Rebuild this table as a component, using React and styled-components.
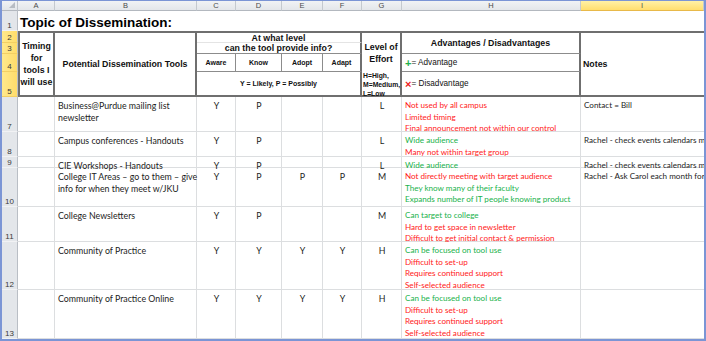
import styled, { createGlobalStyle } from 'styled-components';

const GlobalStyle = createGlobalStyle`
  html, body { margin: 0; padding: 0; background: #fff; }
  body { font-family: "Liberation Sans", Arial, sans-serif; }
`;

const GRID = '#dcdee0';
const RULE = '2px solid #6f6f6f';
const THIN = '1px solid #8c8c8c';

const COLS = ['A', 'B', 'C', 'D', 'E', 'F', 'G', 'H', 'I'];
const ROWS = [1, 2, 3, 4, 5, 7, 8, 9, 10, 11, 12, 13];

const tools = [
  {
    name: ['Business@Purdue mailing list', 'newsletter'],
    level: ['Y', 'P', '', ''],
    effort: 'L',
    pros: [
      ['r', 'Not used by all campus'],
      ['r', 'Limited timing'],
      ['r', 'Final announcement not within our control'],
    ],
    note: 'Contact = Bill',
  },
  {
    name: ['Campus conferences - Handouts'],
    level: ['Y', 'P', '', ''],
    effort: 'L',
    pros: [
      ['g', 'Wide audience'],
      ['r', 'Many not within target group'],
    ],
    note: 'Rachel - check events calendars monthly',
  },
  {
    name: ['CIE Workshops - Handouts'],
    level: ['Y', 'P', '', ''],
    effort: 'L',
    pros: [['g', 'Wide audience']],
    note: 'Rachel - check events calendars monthly',
  },
  {
    name: ['College IT Areas – go to them – give', 'info for when they meet w/JKU'],
    level: ['Y', 'P', 'P', 'P'],
    effort: 'M',
    pros: [
      ['r', 'Not directly meeting with target audience'],
      ['g', 'They know many of their faculty'],
      ['g', 'Expands number of IT people knowing product'],
    ],
    note: 'Rachel - Ask Carol each month for updates',
  },
  {
    name: ['College Newsletters'],
    level: ['Y', 'P', '', ''],
    effort: 'M',
    pros: [
      ['g', 'Can target to college'],
      ['r', 'Hard to get space in newsletter'],
      ['r', 'Difficult to get initial contact & permission'],
    ],
    note: '',
  },
  {
    name: ['Community of Practice'],
    level: ['Y', 'Y', 'Y', 'Y'],
    effort: 'H',
    pros: [
      ['g', 'Can be focused on tool use'],
      ['r', 'Difficult to set-up'],
      ['r', 'Requires continued support'],
      ['r', 'Self-selected audience'],
    ],
    note: '',
  },
  {
    name: ['Community of Practice Online'],
    level: ['Y', 'Y', 'Y', 'Y'],
    effort: 'H',
    pros: [
      ['g', 'Can be focused on tool use'],
      ['r', 'Difficult to set-up'],
      ['r', 'Requires continued support'],
      ['r', 'Self-selected audience'],
    ],
    note: '',
  },
];

export default function App() {
  return (
    <>
      <GlobalStyle />
      <Frame>
        <Sheet>
          <Corner />
          {COLS.map((c, i) => (
            <ColHead key={c} $col={i + 2} $selected={c === 'I'}>
              {c}
            </ColHead>
          ))}
          {ROWS.map((r, i) => (
            <RowHead key={r} $row={i + 2} $selected={r >= 2 && r <= 5}>
              {r}
            </RowHead>
          ))}

          <Title $col={2} $span={9} $row={2}>
            Topic of Dissemination:
          </Title>

          <Head $col={2} $row={3} $rspan={4} $bl $bt $br $bb $center>
            Timing
            <br />
            for
            <br />
            tools I
            <br />
            will use
          </Head>
          <Head $col={3} $row={3} $rspan={4} $bt $br $bb $center>
            Potential Dissemination Tools
          </Head>
          <Head $col={4} $span={4} $row={3} $bt $br $faint $center>
            At what level
          </Head>
          <Head $col={4} $span={4} $row={4} $br $thinBottom $center>
            can the tool provide info?
          </Head>
          {['Aware', 'Know', 'Adopt', 'Adapt'].map((l, i) => (
            <Small
              key={l}
              $col={4 + i}
              $row={5}
              $thinRight={i < 3}
              $br={i === 3}
              $thinBottom
              $center
            >
              {l}
            </Small>
          ))}
          <Small $col={4} $span={4} $row={6} $br $bb $center>
            Y = Likely, P = Possibly
          </Small>
          <Head $col={8} $row={3} $rspan={3} $bt $br $center>
            Level of
            <br />
            Effort
          </Head>
          <Legend $col={8} $row={6} $br $bb>
            <span>H=High,</span>
            <span>M=Medium,</span>
            <span>L=Low</span>
          </Legend>
          <Head $col={9} $row={3} $rspan={2} $bt $br $thinBottom $center>
            Advantages / Disadvantages
          </Head>
          <Key $col={9} $row={5} $br $thinBottom>
            <Mark $tone="g">+</Mark>= Advantage
          </Key>
          <Key $col={9} $row={6} $br $bb>
            <Mark $tone="r">×</Mark> = Disadvantage
          </Key>
          <Head $col={10} $row={3} $rspan={4} $bt $bb>
            Notes
          </Head>

          {tools.map((t, i) => {
            const row = i + 7;
            return [
              <Data key={`a${i}`} $col={2} $row={row} />,
              <Data key={`b${i}`} $col={3} $row={row} $large>
                {t.name.map((n, j) => (
                  <Line key={j}>{n}</Line>
                ))}
              </Data>,
              ...t.level.map((v, j) => (
                <Data key={`l${i}${j}`} $col={4 + j} $row={row} $center $large>
                  {v}
                </Data>
              )),
              <Data key={`g${i}`} $col={8} $row={row} $center $large>
                {t.effort}
              </Data>,
              <Data key={`h${i}`} $col={9} $row={row}>
                {t.pros.map(([tone, text], j) => (
                  <Line key={j} $tone={tone}>
                    {text}
                  </Line>
                ))}
              </Data>,
              <Data key={`i${i}`} $col={10} $row={row} $noRight>
                <Line>{t.note}</Line>
              </Data>,
            ];
          })}
        </Sheet>
      </Frame>
    </>
  );
}

const Frame = styled.div`
  width: 706px;
  height: 341px;
  box-sizing: border-box;
  border: 2px solid #7b95d5;
  border-top-width: 1px;
  overflow: hidden;
  background: #fff;
`;

const Sheet = styled.div`
  display: grid;
  grid-template-columns: 16px 37px 142px 39px 46px 41px 39px 40px 179px 1fr;
  grid-template-rows: 10px 20px 12px 11px 18px 25px 35px 25px 11px 39px 35px 48px 49px;
`;

const Cell = styled.div`
  grid-column: ${p => p.$col} / span ${p => p.$span || 1};
  grid-row: ${p => p.$row} / span ${p => p.$rspan || 1};
  box-sizing: border-box;
  min-width: 0;
`;

const Corner = styled.div`
  grid-column: 1;
  grid-row: 1;
  position: relative;
  background: linear-gradient(#f1f3f5, #e2e5e9);
  border-right: 1px solid #bfc4ca;
  border-bottom: 1px solid #b3b8bf;
  &::after {
    content: '';
    position: absolute;
    right: 2px;
    bottom: 2px;
    border-style: solid;
    border-width: 0 0 6px 6px;
    border-color: transparent transparent #b7bcc3 transparent;
  }
`;

const ColHead = styled(Cell)`
  grid-row: 1;
  display: flex;
  align-items: center;
  justify-content: center;
  font-size: 7.5px;
  color: #4a4a4a;
  background: ${p =>
    p.$selected
      ? 'linear-gradient(#fff1a6, #ffde6e)'
      : 'linear-gradient(#f1f3f5, #e3e6ea)'};
  border-right: 1px solid #c4c9cf;
  border-bottom: 1px solid ${p => (p.$selected ? '#e8b94a' : '#b3b8bf')};
`;

const RowHead = styled(Cell)`
  grid-column: 1;
  display: flex;
  align-items: flex-end;
  justify-content: center;
  font-size: 8px;
  line-height: 9px;
  color: #3a3a3a;
  background: ${p =>
    p.$selected ? 'linear-gradient(90deg, #ffe98c, #ffdc6a)' : '#e3e6ea'};
  border-right: 1px solid #b9bec5;
  border-bottom: 1px solid ${p => (p.$selected ? '#f3cf63' : '#f1f2f4')};
`;

const Title = styled(Cell)`
  display: flex;
  align-items: center;
  padding: 2px 0 0 2px;
  font-size: 13.5px;
  font-weight: bold;
  color: #000;
  white-space: nowrap;
`;

const Head = styled(Cell)`
  display: flex;
  flex-direction: column;
  justify-content: center;
  align-items: ${p => (p.$center ? 'center' : 'flex-start')};
  text-align: ${p => (p.$center ? 'center' : 'left')};
  padding: 0 2px;
  font-size: 8.8px;
  line-height: 12px;
  font-weight: bold;
  color: #111;
  white-space: nowrap;
  border-top: ${p => (p.$bt ? RULE : 'none')};
  border-left: ${p => (p.$bl ? RULE : 'none')};
  border-right: ${p => (p.$br ? RULE : p.$thinRight ? THIN : 'none')};
  border-bottom: ${p =>
    p.$bb ? RULE : p.$thinBottom ? THIN : p.$faint ? '1px solid #e4e4e4' : 'none'};
`;

const Small = styled(Head)`
  font-size: 7px;
  line-height: 8px;
`;

const Legend = styled(Head)`
  align-items: flex-start;
  justify-content: flex-start;
  padding: 0 0 0 1px;
  font-size: 6.8px;
  line-height: 9px;
  & > span:first-child {
    margin-top: -1px;
  }
`;

const Key = styled(Head)`
  flex-direction: row;
  justify-content: flex-start;
  align-items: center;
  font-size: 8.2px;
  font-weight: normal;
  padding-left: 3px;
`;

const Mark = styled.span`
  font-weight: bold;
  font-size: 11px;
  color: ${p => (p.$tone === 'g' ? '#22b14c' : '#ee1c24')};
`;

const Data = styled(Cell)`
  padding: 3px 2px 0 3px;
  font-family: Lato, "Liberation Sans", sans-serif;
  font-size: ${p => (p.$large ? '8.8px' : '8.1px')};
  line-height: 11.6px;
  color: #1c1c1c;
  text-align: ${p => (p.$center ? 'center' : 'left')};
  border-right: ${p => (p.$noRight ? 'none' : `1px solid ${GRID}`)};
  border-bottom: 1px solid ${GRID};
  white-space: nowrap;
`;

const Line = styled.div`
  color: ${p =>
    p.$tone === 'g' ? '#19b24b' : p.$tone === 'r' ? '#ff1a1a' : 'inherit'};
`;
